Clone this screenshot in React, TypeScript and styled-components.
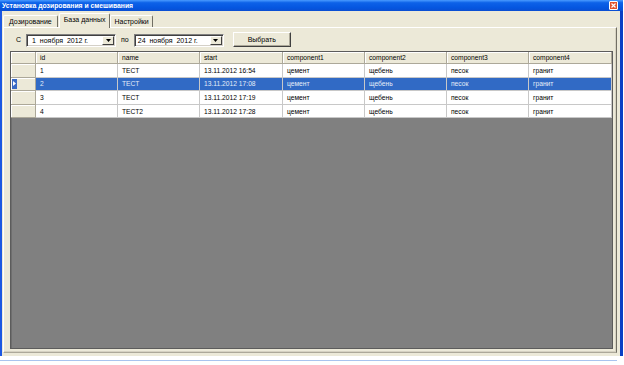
import styled, { createGlobalStyle } from 'styled-components';

const GlobalStyle = createGlobalStyle`
  html, body {
    margin: 0;
    padding: 0;
    background: #ffffff;
  }
  * {
    box-sizing: border-box;
  }
`

interface Row {
  id: string;
  name: string;
  start: string;
  c1: string;
  c2: string;
  c3: string;
  c4: string;
}

const columns = ['id', 'name', 'start', 'component1', 'component2', 'component3', 'component4'];
const colWidths = [82, 82, 83, 82, 82, 82, 83];

const rows: Row[] = [
  { id: '1', name: 'ТЕСТ', start: '13.11.2012 16:54', c1: 'цемент', c2: 'щебень', c3: 'песок', c4: 'гранит' },
  { id: '2', name: 'ТЕСТ', start: '13.11.2012 17:08', c1: 'цемент', c2: 'щебень', c3: 'песок', c4: 'гранит' },
  { id: '3', name: 'ТЕСТ', start: '13.11.2012 17:19', c1: 'цемент', c2: 'щебень', c3: 'песок', c4: 'гранит' },
  { id: '4', name: 'ТЕСТ2', start: '13.11.2012 17:28', c1: 'цемент', c2: 'щебень', c3: 'песок', c4: 'гранит' },
];

const Page = styled.div`
  width: 624px;
  height: 365px;
  background: #ffffff;
  font-family: "Liberation Sans", Arial, sans-serif;
  overflow: hidden;
`

const Window = styled.div`
  width: 623px;
  height: 356px;
  display: flex;
  flex-direction: column;
  background: #ece9d8;
  border-left: 2px solid #1c58e2;
  border-right: 3px solid #0a3fc4;
`

const TitleBar = styled.div`
  height: 11px;
  margin: 0 -3px 0 -2px;
  padding: 0 3px 0 2px;
  display: flex;
  align-items: center;
  justify-content: space-between;
  background: linear-gradient(#4a9bff 0%, #0d62e8 25%, #0556e0 70%, #0a4ed2 100%);
`

const Title = styled.span`
  color: #ffffff;
  font-size: 6.8px;
  font-weight: bold;
  line-height: 11px;
  white-space: nowrap;
`

const CloseButton = styled.div`
  width: 9px;
  height: 9px;
  margin-right: 2px;
  border: 1px solid #ffffff;
  border-radius: 1px;
  background: #e2532f;
  display: flex;
  align-items: center;
  justify-content: center;
`

const TabStrip = styled.div`
  height: 16px;
  display: flex;
  align-items: flex-end;
  padding-left: 1px;
  position: relative;
  z-index: 1;
`

const Tab = styled.div<{ $active?: boolean; $px: number }>`
  height: ${p => (p.$active ? '15px' : '12px')};
  margin-bottom: ${p => (p.$active ? '-1px' : '0')};
  padding: 0 ${p => p.$px}px;
  margin-right: ${p => (p.$active ? '0' : '1px')};
  background: #ece9d8;
  border-top: 1px solid #ffffff;
  border-left: 1px solid #ffffff;
  border-right: 1px solid #716f64;
  border-radius: 2px 2px 0 0;
  font-size: 7px;
  line-height: ${p => (p.$active ? '12px' : '11px')};
  color: #000000;
  white-space: nowrap;
`

const TabPanel = styled.div`
  flex: 1;
  margin: 0 3px 3px 1px;
  padding: 4px 3px 3px 6px;
  display: flex;
  flex-direction: column;
  border-top: 1px solid #ffffff;
  border-left: 1px solid #ffffff;
  border-right: 1px solid #716f64;
  border-bottom: 1px solid #aca899;
  box-shadow: inset -1px -1px 0 #d6d2c2;
`

const Toolbar = styled.div`
  height: 15px;
  margin-bottom: 4px;
  display: flex;
  align-items: center;
  font-size: 7px;
`

const Label = styled.span<{ $ml: number }>`
  margin-left: ${p => p.$ml}px;
  margin-right: 5px;
  color: #000000;
`

const Combo = styled.div<{ $pl: number }>`
  width: 90px;
  height: 13px;
  margin-top: 1px;
  display: flex;
  align-items: center;
  justify-content: space-between;
  background: #ffffff;
  border-top: 1px solid #808080;
  border-left: 1px solid #808080;
  border-right: 1px solid #ffffff;
  border-bottom: 1px solid #ffffff;
  box-shadow: inset 1px 1px 0 #404040, inset -1px -1px 0 #d4d0c8;
  padding: 0 1px 0 ${p => p.$pl}px;
  margin-right: 5px;
  white-space: pre;
`

const ArrowButton = styled.div`
  width: 12px;
  height: 9px;
  background: #ece9d8;
  border-top: 1px solid #ffffff;
  border-left: 1px solid #ffffff;
  border-right: 1px solid #404040;
  border-bottom: 1px solid #404040;
  display: flex;
  align-items: center;
  justify-content: center;
`

const Button = styled.div`
  width: 58px;
  height: 15px;
  margin-left: 4px;
  display: flex;
  align-items: center;
  justify-content: center;
  background: #ece9d8;
  border-top: 1px solid #ffffff;
  border-left: 1px solid #ffffff;
  border-right: 1px solid #404040;
  border-bottom: 1px solid #404040;
  box-shadow: inset -1px -1px 0 #aca899;
  font-size: 7px;
`

const Grid = styled.div`
  flex: 1;
  background: #808080;
  border: 1px solid #5c5c5c;
  box-shadow: inset 1px 1px 0 #6e6e6e;
`

const Table = styled.div`
  display: grid;
  grid-template-columns: 25px ${colWidths.map(w => `${w}px`).join(' ')};
  grid-template-rows: 12px repeat(${rows.length}, 13.6px);
  background: #ffffff;
`

const HeaderCell = styled.div`
  background: #ece9d8;
  border-right: 1px solid #aca899;
  border-bottom: 1px solid #aca899;
  box-shadow: inset 1px 1px 0 #ffffff;
  padding-left: 4px;
  font-size: 6.7px;
  line-height: 11px;
  color: #000000;
  white-space: nowrap;
  overflow: hidden;
`

const RowHeader = styled.div`
  background: #ece9d8;
  border-right: 1px solid #aca899;
  border-bottom: 1px solid #aca899;
  box-shadow: inset 1px 1px 0 #ffffff;
  display: flex;
  align-items: center;
  padding-left: 1px;
`

const Marker = styled.div`
  width: 5px;
  height: 10px;
  background: #3a6ac4;
  display: flex;
  align-items: center;
  justify-content: center;
`

const Cell = styled.div<{ $selected?: boolean }>`
  background: ${p => (p.$selected ? '#316ac5' : '#ffffff')};
  color: ${p => (p.$selected ? '#e4ecf8' : '#000000')};
  border-right: 1px solid #c8c8c8;
  border-bottom: 1px solid #c8c8c8;
  padding-left: 4px;
  font-size: 6.7px;
  display: flex;
  align-items: center;
  white-space: nowrap;
  overflow: hidden;
`

const BottomLine = styled.div`
  width: 617px;
  height: 1px;
  margin-top: 4px;
  background: #a9c4ef;
`

const DownArrow = () => (
  <svg width="5" height="3" viewBox="0 0 5 3">
    <polygon points="0,0 5,0 2.5,3" fill="#000000" />
  </svg>
);

const App = () => {
  const selected = 1;

  return (
    <Page>
      <GlobalStyle />
      <Window>
        <TitleBar>
          <Title>Установка дозирования и смешивания</Title>
          <CloseButton>
            <svg width="5" height="5" viewBox="0 0 5 5">
              <path d="M0.5 0.5 L4.5 4.5 M4.5 0.5 L0.5 4.5" stroke="#ffffff" strokeWidth="1.2" />
            </svg>
          </CloseButton>
        </TitleBar>

        <TabStrip>
          <Tab $px={5}>Дозирование</Tab>
          <Tab $active $px={4}>База данных</Tab>
          <Tab $px={3}>Настройки</Tab>
        </TabStrip>

        <TabPanel>
          <Toolbar>
            <Label $ml={6}>С</Label>
            <Combo $pl={5}>
              <span>1  ноября  2012 г.</span>
              <ArrowButton><DownArrow /></ArrowButton>
            </Combo>
            <Label $ml={0}>по</Label>
            <Combo $pl={3}>
              <span>24  ноября  2012 г.</span>
              <ArrowButton><DownArrow /></ArrowButton>
            </Combo>
            <Button>Выбрать</Button>
          </Toolbar>

          <Grid>
            <Table>
              <HeaderCell />
              {columns.map(c => (
                <HeaderCell key={c}>{c}</HeaderCell>
              ))}
              {rows.map((r, i) => {
                const isSel = i === selected;
                return [
                  <RowHeader key={`h${i}`}>
                    {isSel && (
                      <Marker>
                        <svg width="3" height="5" viewBox="0 0 3 5">
                          <polygon points="0,0 3,2.5 0,5" fill="#ffffff" />
                        </svg>
                      </Marker>
                    )}
                  </RowHeader>,
                  ...[r.id, r.name, r.start, r.c1, r.c2, r.c3, r.c4].map((v, j) => (
                    <Cell key={`${i}-${j}`} $selected={isSel}>{v}</Cell>
                  )),
                ];
              })}
            </Table>
          </Grid>
        </TabPanel>
      </Window>
      <BottomLine />
    </Page>
  );
}

export default App;
